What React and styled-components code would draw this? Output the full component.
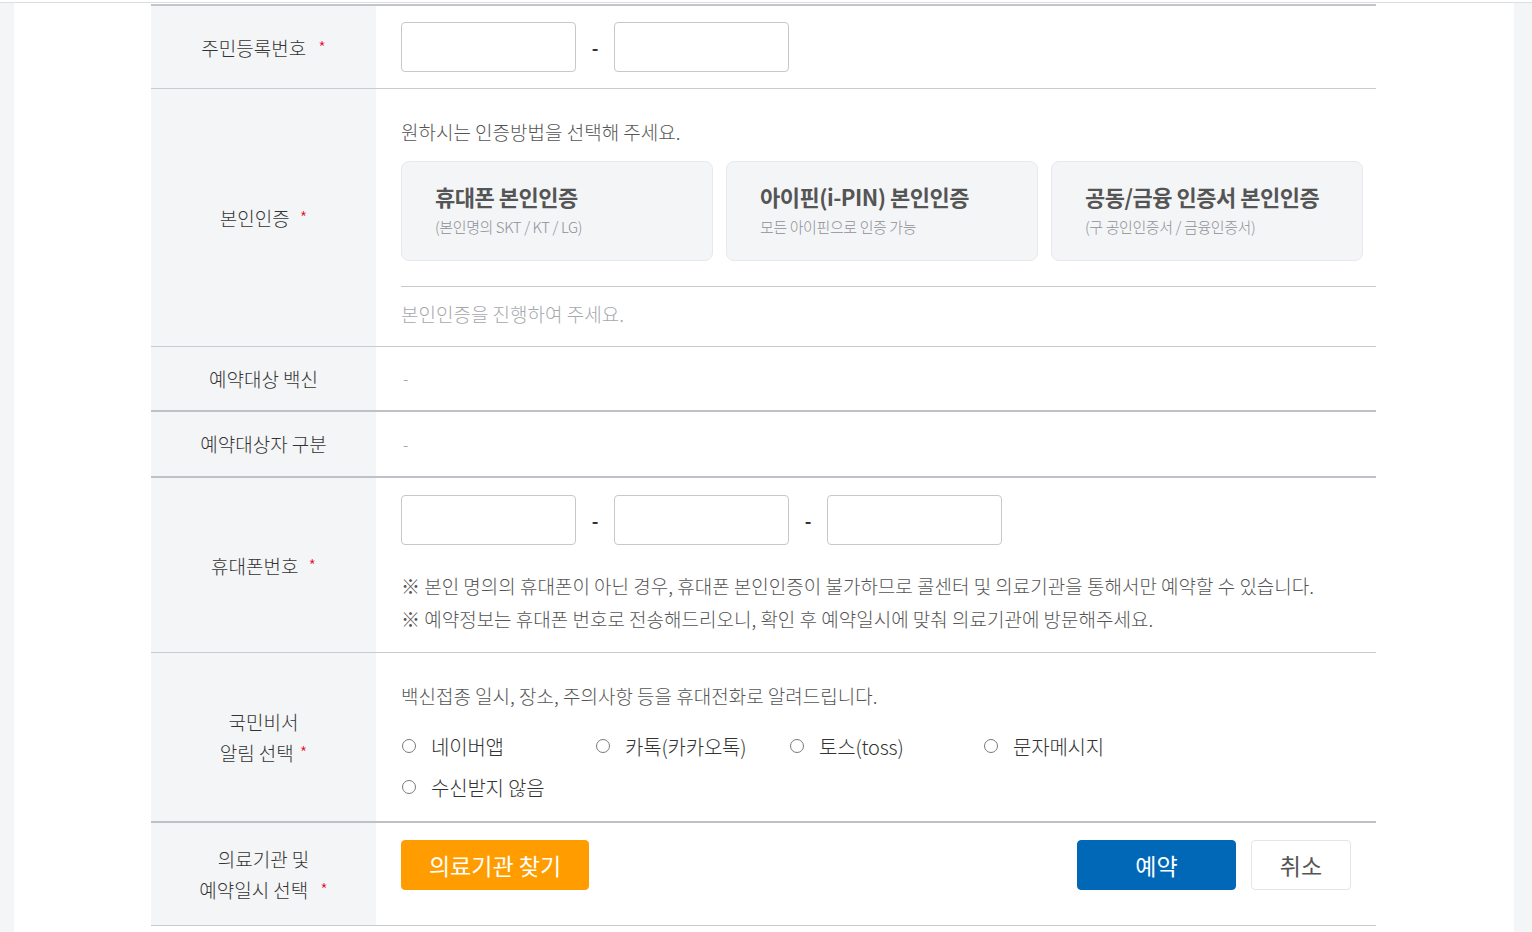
import React from "react";
import styled, { createGlobalStyle } from "styled-components";

const GlobalStyle = createGlobalStyle`
  html, body {
    margin: 0;
    padding: 0;
    background: #f4f5f7;
    font-family: "Noto Sans CJK KR", "Noto Sans", sans-serif;
    font-weight: 300;
    color: #333;
  }
  * { box-sizing: border-box; }
`;

const TopBar = styled.div`
  height: 3px;
  background: #fff;
  border-bottom: 1px solid #dcdee2;
`;

const Page = styled.div`
  margin: 0 18px 0 14px;
  min-height: calc(100vh - 3px);
  background: #fff;
  padding: 1px 138px 0 137px;
`;

const Table = styled.div`
  border-top: 2px solid #c3c5ca;
`;

const Row = styled.div`
  display: grid;
  grid-template-columns: 225px 1fr;
  min-height: ${(p) => p.$min || 0}px;
  border-bottom: ${(p) => (p.$thick ? "2px solid #bfc1c6" : "1px solid #c8cacf")};
`;

const Head = styled.div`
  background: #f4f5f7;
  display: flex;
  align-items: center;
  justify-content: center;
`;

const HeadText = styled.span`
  display: block;
  text-align: center;
  font-size: 19px;
  line-height: 30px;
  color: #333;
`;

const Star = styled.span`
  color: #e4002b;
  font-size: 17px;
  margin-left: ${(p) => p.$gap || 10}px;
  vertical-align: 2px;
`;

const Cell = styled.div`
  padding: ${(p) => p.$pad || "16px 0 16px 25px"};
  display: flex;
  flex-direction: column;
  justify-content: ${(p) => (p.$center ? "center" : "flex-start")};
`;

const InputRow = styled.div`
  display: flex;
  align-items: center;
`;

const Input = styled.input`
  width: 175px;
  height: 50px;
  border: 1px solid #c7c8cc;
  border-radius: 4px;
  outline: none;
  font-size: 16px;
  padding: 0 12px;
`;

const Dash = styled.span`
  width: 38px;
  text-align: center;
  font-size: 18px;
  font-weight: 700;
  color: #333;
`;

const Guide = styled.p`
  margin: 0;
  font-size: 19px;
  line-height: 26px;
  color: ${(p) => (p.$muted ? "#a6a8ad" : "#555")};
`;

const Cards = styled.div`
  display: flex;
  gap: 13px;
  margin-top: 16px;
`;

const Card = styled.button`
  width: 312px;
  height: 100px;
  background: #f4f5f7;
  border: 1px solid #e8e9ee;
  border-radius: 8px;
  padding: 19px 33px;
  text-align: left;
  font-family: inherit;
  cursor: pointer;
  display: flex;
  flex-direction: column;
`;

const CardTitle = styled.strong`
  font-size: 22px;
  line-height: 30px;
  font-weight: 700;
  letter-spacing: -0.5px;
  color: #555;
`;

const CardSub = styled.span`
  margin-top: 6px;
  font-size: 15px;
  line-height: 20px;
  font-weight: 300;
  letter-spacing: -0.4px;
  color: #8e9096;
`;

const Divider = styled.hr`
  margin: 25px 0 14px;
  border: 0;
  border-top: 1px solid #c8cacf;
`;

const Empty = styled.span`
  font-size: 16px;
  color: #999;
  line-height: 27px;
  padding-left: 2px;
`;

const Notes = styled.div`
  margin-top: 24px;
`;

const Note = styled.p`
  margin: 0;
  font-size: 19px;
  line-height: 33px;
  color: #555;
`;

const Radios = styled.div`
  display: grid;
  grid-template-columns: repeat(4, 194px);
  row-gap: 11px;
  margin-top: 22px;
`;

const RadioLabel = styled.label`
  display: flex;
  align-items: center;
  height: 30px;
  font-size: 20px;
  letter-spacing: -0.2px;
  color: #333;
  cursor: pointer;
`;

const RadioDot = styled.span`
  width: 14px;
  height: 14px;
  border-radius: 50%;
  border: 1.5px solid #7a7a7a;
  margin: 0 15px 0 1px;
  flex-shrink: 0;
`;

const Actions = styled.div`
  display: flex;
  align-items: center;
  padding-right: 25px;
`;

const Btn = styled.button`
  height: 50px;
  width: ${(p) => p.$w}px;
  border-radius: 4px;
  border: 1px solid ${(p) => p.$border || p.$bg};
  background: ${(p) => p.$bg};
  color: ${(p) => p.$color || "#fff"};
  font-family: inherit;
  font-weight: 400;
  font-size: 23px;
  cursor: pointer;
  margin-left: ${(p) => p.$ml || 0};
`;

const radios = ["네이버앱", "카톡(카카오톡)", "토스(toss)", "문자메시지", "수신받지 않음"];

export default function App() {
  return (
    <>
      <GlobalStyle />
      <TopBar />
      <Page>
        <Table>
          <Row>
            <Head>
              <HeadText>
                주민등록번호<Star $gap={12}>*</Star>
              </HeadText>
            </Head>
            <Cell>
              <InputRow>
                <Input />
                <Dash>-</Dash>
                <Input type="password" />
              </InputRow>
            </Cell>
          </Row>

          <Row>
            <Head>
              <HeadText>
                본인인증<Star>*</Star>
              </HeadText>
            </Head>
            <Cell $pad="30px 0 19px 25px">
              <Guide>원하시는 인증방법을 선택해 주세요.</Guide>
              <Cards>
                <Card>
                  <CardTitle>휴대폰 본인인증</CardTitle>
                  <CardSub>(본인명의 SKT / KT / LG)</CardSub>
                </Card>
                <Card>
                  <CardTitle>아이핀(i-PIN) 본인인증</CardTitle>
                  <CardSub>모든 아이핀으로 인증 가능</CardSub>
                </Card>
                <Card>
                  <CardTitle>공동/금융 인증서 본인인증</CardTitle>
                  <CardSub>(구 공인인증서 / 금융인증서)</CardSub>
                </Card>
              </Cards>
              <Divider />
              <Guide $muted>본인인증을 진행하여 주세요.</Guide>
            </Cell>
          </Row>

          <Row $thick $min={65}>
            <Head>
              <HeadText>예약대상 백신</HeadText>
            </Head>
            <Cell $pad="0 0 0 25px" $center>
              <Empty>-</Empty>
            </Cell>
          </Row>

          <Row $thick $min={66}>
            <Head>
              <HeadText>예약대상자 구분</HeadText>
            </Head>
            <Cell $pad="0 0 0 25px" $center>
              <Empty>-</Empty>
            </Cell>
          </Row>

          <Row>
            <Head>
              <HeadText>
                휴대폰번호<Star>*</Star>
              </HeadText>
            </Head>
            <Cell $pad="17px 0 17px 25px">
              <InputRow>
                <Input />
                <Dash>-</Dash>
                <Input />
                <Dash>-</Dash>
                <Input />
              </InputRow>
              <Notes>
                <Note>
                  ※ 본인 명의의 휴대폰이 아닌 경우, 휴대폰 본인인증이 불가하므로 콜센터 및 의료기관을 통해서만 예약할 수 있습니다.
                </Note>
                <Note>
                  ※ 예약정보는 휴대폰 번호로 전송해드리오니, 확인 후 예약일시에 맞춰 의료기관에 방문해주세요.
                </Note>
              </Notes>
            </Cell>
          </Row>

          <Row $thick>
            <Head>
              <HeadText>
                국민비서
                <br />
                알림 선택<Star $gap={6}>*</Star>
              </HeadText>
            </Head>
            <Cell $pad="30px 0 19px 25px">
              <Guide>백신접종 일시, 장소, 주의사항 등을 휴대전화로 알려드립니다.</Guide>
              <Radios>
                {radios.map((r) => (
                  <RadioLabel key={r}>
                    <RadioDot />
                    {r}
                  </RadioLabel>
                ))}
              </Radios>
            </Cell>
          </Row>

          <Row $min={103}>
            <Head>
              <HeadText>
                의료기관 및
                <br />
                예약일시 선택<Star $gap={12}>*</Star>
              </HeadText>
            </Head>
            <Cell $pad="17px 0 17px 25px">
              <Actions>
                <Btn $w={188} $bg="#ff9c00">의료기관 찾기</Btn>
                <Btn $w={159} $bg="#0068b7" $ml="auto">예약</Btn>
                <Btn $w={100} $bg="#fff" $border="#e3e5ec" $color="#555" $ml="15px">
                  취소
                </Btn>
              </Actions>
            </Cell>
          </Row>
        </Table>
      </Page>
    </>
  );
}
